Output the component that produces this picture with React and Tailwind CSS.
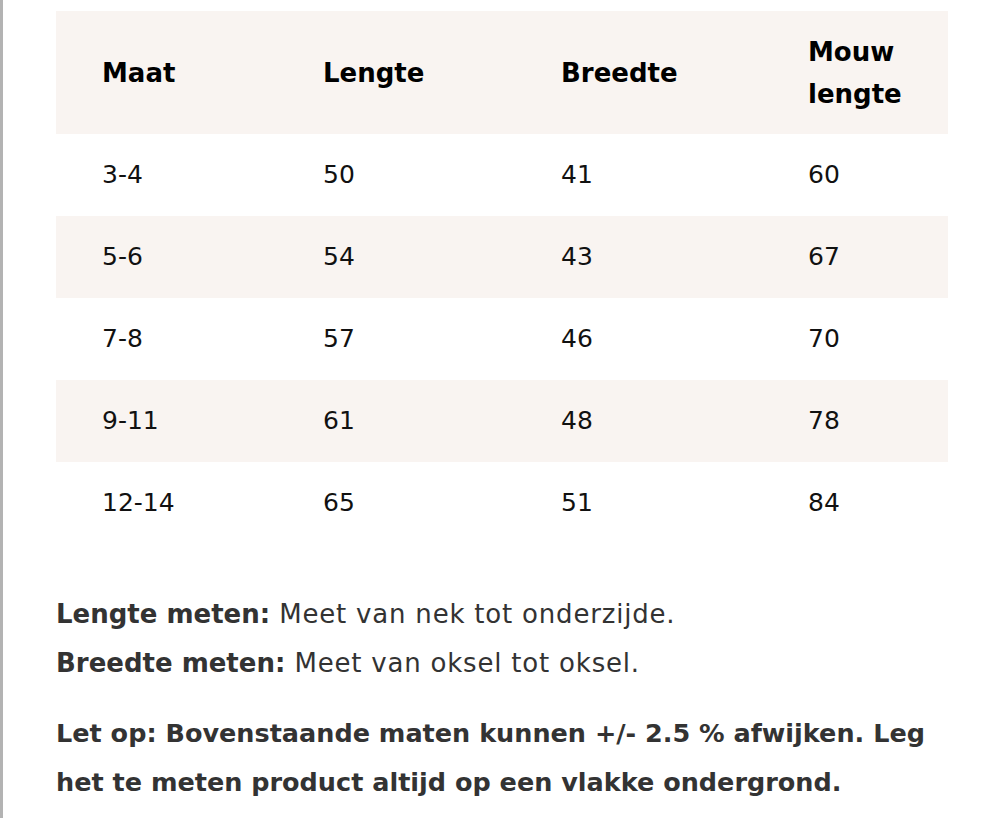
import React from "react";

const rows = [
  ["3-4", "50", "41", "60"],
  ["5-6", "54", "43", "67"],
  ["7-8", "57", "46", "70"],
  ["9-11", "61", "48", "78"],
  ["12-14", "65", "51", "84"],
];

export default function App() {
  return (
    <div
      className="min-h-[818px] bg-white border-l-[3px] border-[#b3b3b3] pl-[53px] pr-[52px] pt-[11px]"
      style={{ fontFamily: '"DejaVu Sans", "Open Sans", sans-serif' }}
    >
      {/* size table */}
      <table className="w-[892px] table-fixed border-collapse text-[25px] text-[#111]">
        <colgroup>
          <col className="w-[221px]" />
          <col className="w-[238px]" />
          <col className="w-[247px]" />
          <col className="w-[186px]" />
        </colgroup>
        <thead>
          <tr className="h-[123px] bg-[#f9f4f1] text-[26px]">
            <th className="pl-[46px] text-left font-bold leading-[42px] text-black">Maat</th>
            <th className="pl-[46px] text-left font-bold leading-[42px] text-black">Lengte</th>
            <th className="pl-[46px] text-left font-bold leading-[42px] text-black">Breedte</th>
            <th className="pl-[46px] pr-[40px] text-left font-bold leading-[42px] text-black">Mouw lengte</th>
          </tr>
        </thead>
        <tbody>
          {rows.map((r, i) => (
            <tr key={r[0]} className={i % 2 === 1 ? "h-[82px] bg-[#f9f4f1]" : "h-[82px] bg-white"}>
              {r.map((c, j) => (
                <td key={j} className="pl-[46px] leading-[42px]">{c}</td>
              ))}
            </tr>
          ))}
        </tbody>
      </table>

      {/* notes */}
      <div className="mt-[46px] text-[26px] leading-[49px] text-[#333]">
        <p className="tracking-[0.8px]">
          <strong className="tracking-normal">Lengte meten:</strong> Meet van nek tot onderzijde.
          <br />
          <strong className="tracking-normal">Breedte meten:</strong> Meet van oksel tot oksel.
        </p>
        <p className="mt-[21px] text-[25.5px] font-bold">
          Let op: Bovenstaande maten kunnen +/- 2.5 % afwijken. Leg het te meten product altijd op een vlakke ondergrond.
        </p>
      </div>
    </div>
  );
}
